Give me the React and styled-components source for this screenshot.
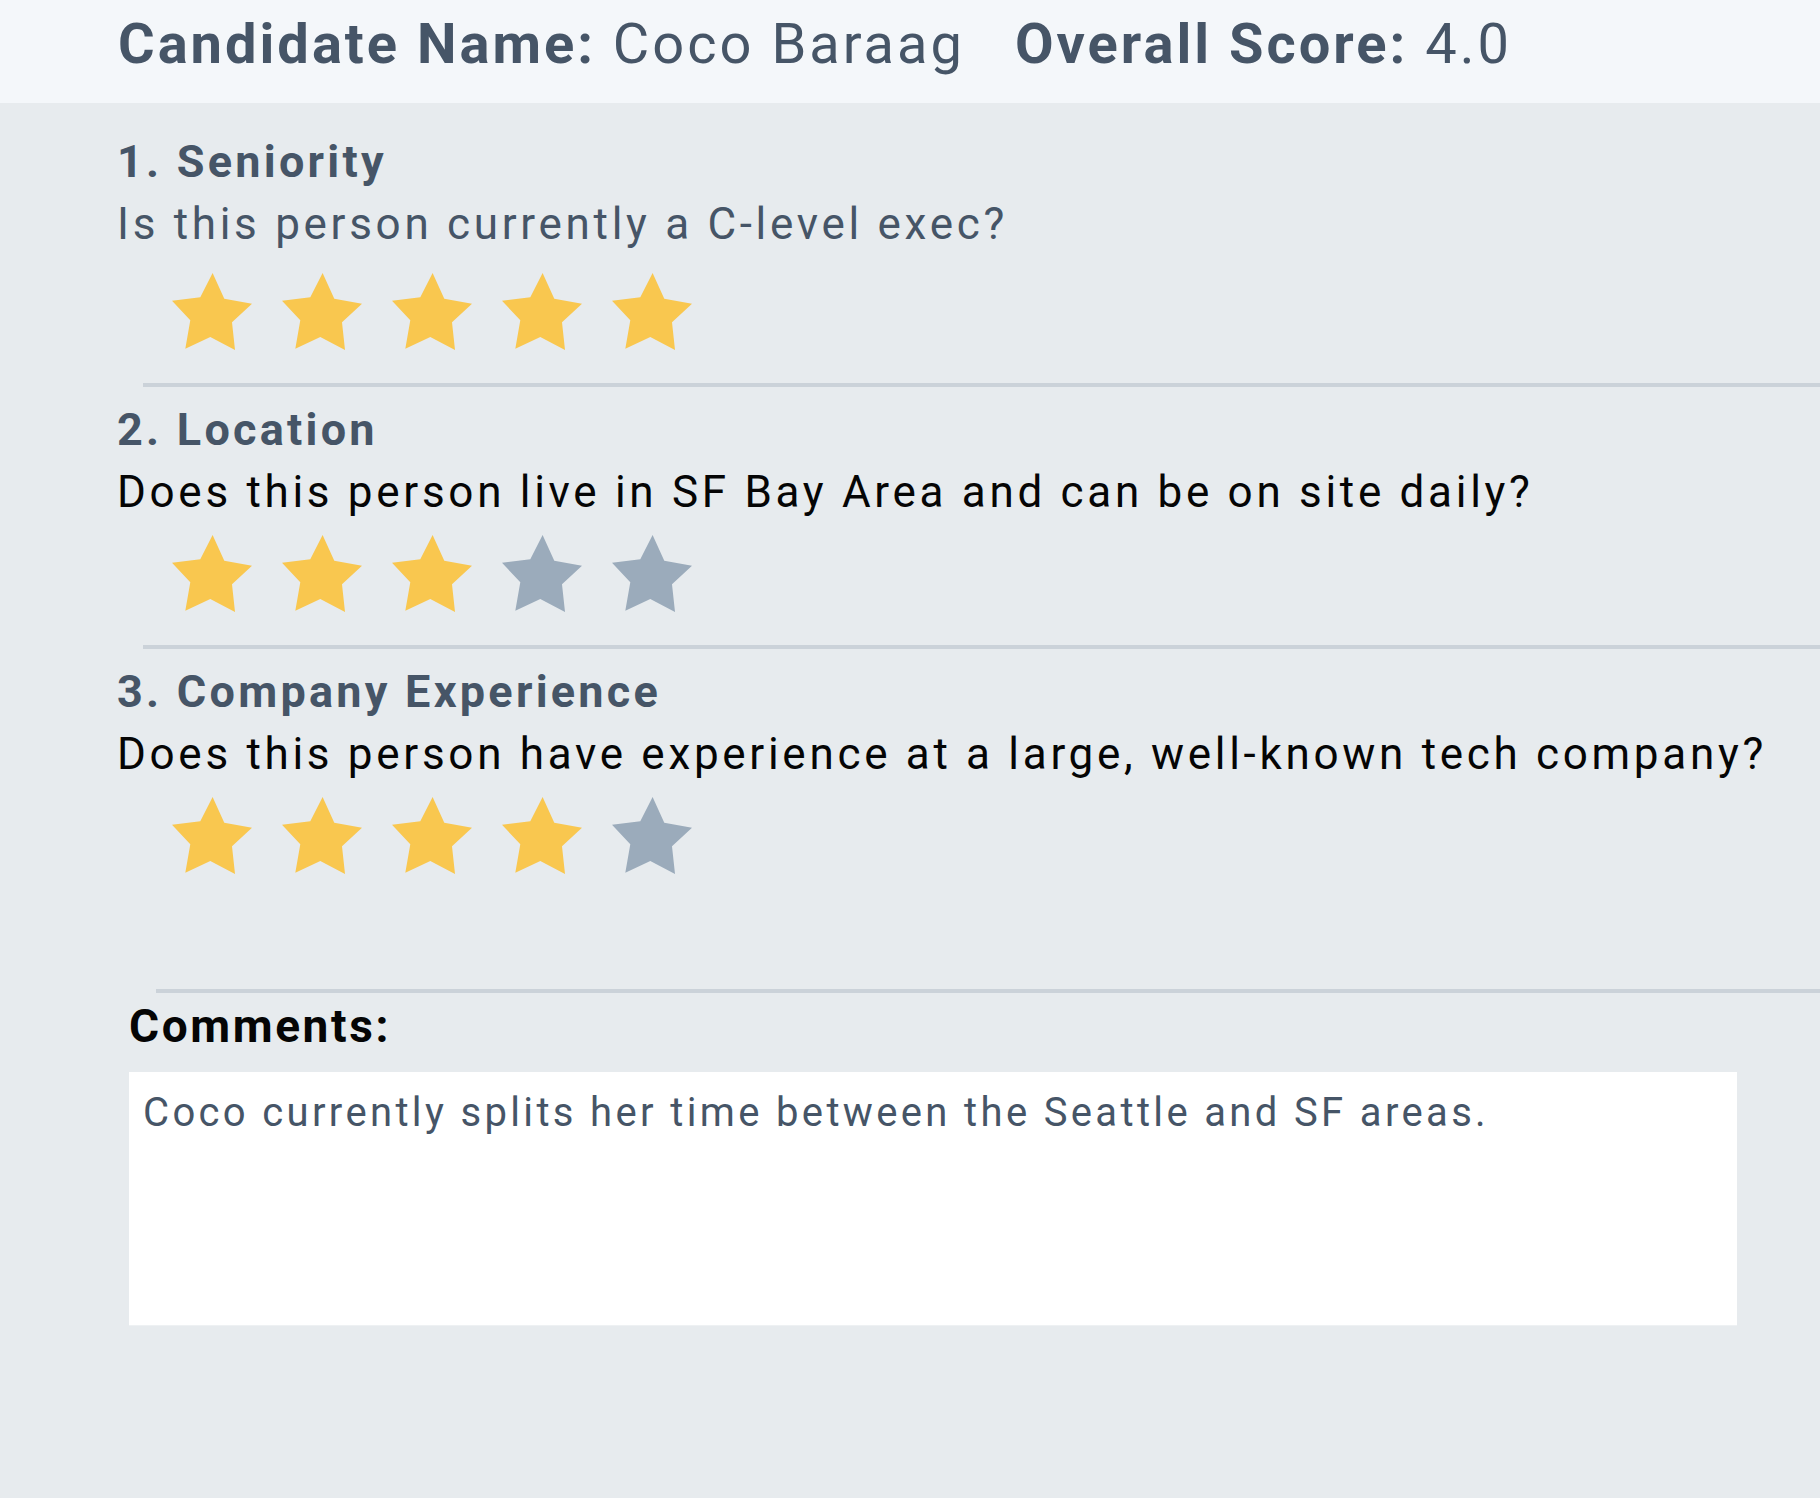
import React from "react";
import styled, { createGlobalStyle } from "styled-components";

const GlobalStyle = createGlobalStyle`
  html, body {
    margin: 0;
    padding: 0;
    background: #e7ebee;
  }
  body {
    font-family: Roboto, "Noto Sans", "Liberation Sans", sans-serif;
    min-height: 1498px;
  }
  * { box-sizing: border-box; }
`;

const Page = styled.div`
  min-height: 1498px;
  background: #e7ebee;
`;

const Header = styled.header`
  display: flex;
  align-items: flex-start;
  gap: 50px;
  height: 103px;
  padding: 11px 0 0 118px;
  background: #f4f7fa;
  color: #465567;
  font-size: 56px;
  line-height: 66px;
  letter-spacing: 3px;
  white-space: nowrap;
`;

const HeaderItem = styled.div`
  font-weight: 400;
`;

const Strong = styled.span`
  font-weight: 700;
`;

const Main = styled.main`
  padding-top: 16px;
`;

const Section = styled.section`
  padding-top: 12px;
`;

const SectionBody = styled.div`
  padding-left: 117px;
`;

const Title = styled.h2`
  margin: 0;
  font-size: 45px;
  line-height: 62px;
  font-weight: 700;
  letter-spacing: 3.25px;
  color: #465567;
`;

const Question = styled.p`
  margin: 0;
  font-size: 44px;
  line-height: 62px;
  font-weight: 400;
  letter-spacing: 3.7px;
  color: ${(p) => (p.$muted ? "#465567" : "#050505")};
  white-space: nowrap;
`;

const StarRow = styled.div`
  display: flex;
  gap: 30px;
  margin: ${(p) => (p.$loose ? "18px" : "12px")} 0 33px 55px;
`;

const StarSvg = styled.svg`
  display: block;
  width: 80px;
  height: 77px;
  fill: ${(p) => (p.$on ? "#f9c74f" : "#9babbb")};
`;

const Divider = styled.hr`
  margin: 0 0 0 ${(p) => p.$inset}px;
  border: none;
  height: 4px;
  background: #cbd2d9;
`;

const Comments = styled.section`
  padding-top: 82px;
`;

const CommentsBody = styled.div`
  padding-left: 129px;
`;

const CommentsLabel = styled.label`
  display: block;
  margin-top: 8px;
  font-size: 46px;
  line-height: 50px;
  font-weight: 700;
  letter-spacing: 2.6px;
  color: #050505;
`;

const CommentBox = styled.textarea`
  display: block;
  margin-top: 21px;
  width: 1608px;
  height: 254px;
  padding: 17px 14px;
  border: none;
  border-bottom: 1px solid #eef1f3;
  outline: none;
  resize: none;
  background: #ffffff;
  font-family: Roboto, "Noto Sans", "Liberation Sans", sans-serif;
  font-size: 40px;
  line-height: 48px;
  letter-spacing: 3.35px;
  color: #465567;
`;

const STAR_POINTS =
  "40.6,0 52.3,25.7 80,30.7 60,49.3 63,77 38.3,64 13.3,75.7 18.3,47.3 0,27.7 28.3,24.3";

function Star({ on }) {
  return (
    <StarSvg $on={on} viewBox="0 0 80 77" aria-hidden="true">
      <polygon points={STAR_POINTS} />
    </StarSvg>
  );
}

function Rating({ value, loose }) {
  return (
    <StarRow $loose={loose}>
      {[1, 2, 3, 4, 5].map((n) => (
        <Star key={n} on={n <= value} />
      ))}
    </StarRow>
  );
}

const criteria = [
  {
    title: "1. Seniority",
    question: "Is this person currently a C-level exec?",
    score: 5,
    muted: true,
  },
  {
    title: "2. Location",
    question: "Does this person live in SF Bay Area and can be on site daily?",
    score: 3,
  },
  {
    title: "3. Company Experience",
    question:
      "Does this person have experience at a large, well-known tech company?",
    score: 4,
  },
];

export default function App() {
  return (
    <Page>
      <GlobalStyle />
      <Header>
        <HeaderItem>
          <Strong>Candidate Name:</Strong> Coco Baraag
        </HeaderItem>
        <HeaderItem>
          <Strong>Overall Score:</Strong> 4.0
        </HeaderItem>
      </Header>
      <Main>
        {criteria.map((c, i) => (
          <Section key={c.title}>
            <SectionBody>
              <Title>{c.title}</Title>
              <Question $muted={c.muted}>{c.question}</Question>
            </SectionBody>
            <SectionBody>
              <Rating value={c.score} loose={c.muted} />
            </SectionBody>
            {i < criteria.length - 1 && <Divider $inset={143} />}
          </Section>
        ))}
        <Comments>
          <Divider $inset={156} />
          <CommentsBody>
            <CommentsLabel htmlFor="comments">Comments:</CommentsLabel>
            <CommentBox
              id="comments"
              readOnly
              defaultValue="Coco currently splits her time between the Seattle and SF areas."
            />
          </CommentsBody>
        </Comments>
      </Main>
    </Page>
  );
}
